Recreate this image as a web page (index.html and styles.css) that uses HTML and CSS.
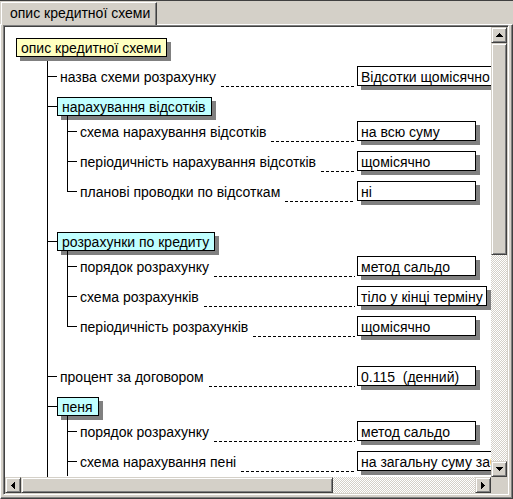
FILE: index.html
```html
<!DOCTYPE html>
<html lang="uk">
<head>
<meta charset="utf-8">
<title>опис кредитної схеми</title>
<link rel="stylesheet" href="styles.css">
</head>
<body>
<div class="tabstrip">
  <div class="tab">опис кредитної схеми</div>
</div>
<div class="panel">
  <div class="control">
    <div class="viewport">
      <div class="tree">
        <div class="rhead"><span class="box root">опис кредитної схеми</span></div>
        <div class="kids1">
          <div class="leaf l1">
            <div class="lead"><span class="tick"></span><span class="label">назва схеми розрахунку</span><span class="dash"></span></div>
            <span class="val">Відсотки щомісячно - тіло у кінці терміну</span>
          </div>
          <div class="group">
            <div class="ghead"><span class="tick"></span><span class="box grp">нарахування відсотків</span></div>
            <div class="kids2">
              <div class="leaf l2">
                <div class="lead"><span class="tick"></span><span class="label">схема нарахування відсотків</span><span class="dash"></span></div>
                <span class="val">на всю суму</span>
              </div>
              <div class="leaf l2">
                <div class="lead"><span class="tick"></span><span class="label">періодичність нарахування відсотків</span><span class="dash"></span></div>
                <span class="val">щомісячно</span>
              </div>
              <div class="leaf l2">
                <div class="lead"><span class="tick"></span><span class="label">планові проводки по відсоткам</span><span class="dash"></span></div>
                <span class="val">ні</span>
              </div>
            </div>
          </div>
          <div class="group">
            <div class="ghead"><span class="tick"></span><span class="box grp">розрахунки по кредиту</span></div>
            <div class="kids2">
              <div class="leaf l2">
                <div class="lead"><span class="tick"></span><span class="label">порядок розрахунку</span><span class="dash"></span></div>
                <span class="val">метод сальдо</span>
              </div>
              <div class="leaf l2">
                <div class="lead"><span class="tick"></span><span class="label">схема розрахунків</span><span class="dash"></span></div>
                <span class="val">тіло у кінці терміну</span>
              </div>
              <div class="leaf l2">
                <div class="lead"><span class="tick"></span><span class="label">періодичність розрахунків</span><span class="dash"></span></div>
                <span class="val">щомісячно</span>
              </div>
            </div>
          </div>
          <div class="leaf l1">
            <div class="lead"><span class="tick"></span><span class="label">процент за договором</span><span class="dash"></span></div>
            <span class="val">0.115  (денний)</span>
          </div>
          <div class="group">
            <div class="ghead"><span class="tick"></span><span class="box grp">пеня</span></div>
            <div class="kids2 cont">
              <div class="leaf l2">
                <div class="lead"><span class="tick"></span><span class="label">порядок розрахунку</span><span class="dash"></span></div>
                <span class="val">метод сальдо</span>
              </div>
              <div class="leaf l2">
                <div class="lead"><span class="tick"></span><span class="label">схема нарахування пені</span><span class="dash"></span></div>
                <span class="val">на загальну суму заборгованості</span>
              </div>
            </div>
          </div>
        </div>
      </div>
    </div>
    <div class="vscroll">
      <div class="btn"><svg width="7" height="4" viewBox="0 0 7 4"><path d="M3 0h1v1h-1zM2 1h3v1h-3zM1 2h5v1h-5zM0 3h7v1h-7z" fill="#000"/></svg></div>
      <div class="thumb vthumb"></div>
      <div class="track"></div>
      <div class="btn"><svg width="7" height="4" viewBox="0 0 7 4"><path d="M0 0h7v1h-7zM1 1h5v1h-5zM2 2h3v1h-3zM3 3h1v1h-1z" fill="#000"/></svg></div>
    </div>
    <div class="hscroll">
      <div class="btn"><svg width="4" height="7" viewBox="0 0 4 7"><path d="M0 3h1v1h-1zM1 2h1v3h-1zM2 1h1v5h-1zM3 0h1v7h-1z" fill="#000"/></svg></div>
      <div class="thumb hthumb"></div>
      <div class="track"></div>
      <div class="btn"><svg width="4" height="7" viewBox="0 0 4 7"><path d="M0 0h1v7h-1zM1 1h1v5h-1zM2 2h1v3h-1zM3 3h1v1h-1z" fill="#000"/></svg></div>
    </div>
    <div class="corner"></div>
  </div>
</div>
</body>
</html>
```
FILE: styles.css
```css
* { box-sizing: border-box; }
html, body { margin: 0; padding: 0; }
body {
  width: 513px;
  height: 499px;
  overflow: hidden;
  background: #d4d0c8;
  font-family: "Liberation Sans", Arial, sans-serif;
  font-size: 14px;
  color: #000;
}

/* tab strip */
.tabstrip {
  height: 24px;
  border-top: 1px solid #404040;
  display: flex;
  align-items: flex-end;
}
.tab {
  position: relative;
  z-index: 1;
  margin-left: 1px;
  margin-bottom: -1px;
  width: 156px;
  height: 23px;
  background: #d4d0c8;
  border-left: 1px solid #fff;
  border-top: 1px solid #fff;
  border-right: 1px solid #404040;
  box-shadow: inset -1px 0 #808080;
  padding: 2px 0 0 8px;
  line-height: 16px;
  white-space: nowrap;
}

/* panel */
.panel {
  height: 475px;
  border: 1px solid;
  border-color: #fff #404040 #404040 #fff;
  box-shadow: inset -1px -1px #808080;
  padding: 0 3px 3px 2px;
}
.control {
  width: 506px;
  height: 470px;
  border: 1px solid;
  border-color: #808080 #fff #fff #808080;
  padding: 1px;
  box-shadow: inset 1px 1px #404040, inset -1px -1px #d4d0c8;
  display: grid;
  grid-template-columns: 486px 16px;
  grid-template-rows: 450px 16px;
}
.viewport {
  overflow: hidden;
  background: #fff;
}

/* tree */
.tree {
  padding: 11px 0 0 11px;
}
.rhead {
  display: flex;
}
.box {
  flex: none;
  height: 19px;
  border: 1px solid #000;
  line-height: 19px;
  padding: 0 5px 0 4px;
  white-space: nowrap;
  box-shadow: 4px 4px 0 #808080;
}
.root { background: #ffffc0; }
.grp { background: #c0ffff; }

.kids1 {
  margin-left: 31px;
  border-left: 1px solid #000;
  padding-top: 4px;
  padding-bottom: 20px;
}
.kids2 {
  margin-left: 19px;
}
.group {
  margin-bottom: 20px;
}
.ghead {
  display: flex;
  align-items: flex-start;
  height: 25px;
  padding-top: 6px;
}
.ghead .tick { margin-top: 9px; }

.leaf {
  display: flex;
  align-items: flex-start;
  height: 30px;
  padding-top: 5px;
}
.l2 {
  position: relative;
  padding-left: 1px;
}
.l2::before {
  content: "";
  position: absolute;
  left: 0;
  top: 0;
  bottom: 0;
  width: 1px;
  background: #000;
}
.l2:last-child::before {
  bottom: auto;
  height: 16px;
}
.cont .l2:last-child::before {
  bottom: 0;
  height: auto;
}
.lead {
  flex: none;
  display: flex;
  align-items: flex-start;
}
.l1 .lead { width: 309px; }
.l2 .lead { width: 289px; }
.tick {
  flex: none;
  width: 9px;
  height: 1px;
  background: #000;
}
.leaf .tick { margin-top: 10px; }
.label {
  margin: 1px 0 0 3px;
  line-height: 20px;
  white-space: nowrap;
}
.dash {
  flex: 1;
  height: 21px;
  margin: 0 2px 0 5px;
  background: repeating-linear-gradient(to right, #000 0 3px, transparent 3px 5px) left bottom / 100% 1px no-repeat;
}
.val {
  flex: none;
  height: 20px;
  min-width: 119px;
  border: 1px solid #000;
  background: #fff;
  line-height: 20px;
  padding: 0 3px;
  white-space: pre;
  box-shadow: 4px 4px 0 #808080;
}

/* scrollbars */
.vscroll {
  display: flex;
  flex-direction: column;
}
.hscroll {
  display: flex;
}
.btn, .thumb {
  flex: none;
  background: #d4d0c8;
  border: 1px solid;
  border-color: #d4d0c8 #404040 #404040 #d4d0c8;
  box-shadow: inset 1px 1px #fff, inset -1px -1px #808080;
}
.btn {
  width: 16px;
  height: 16px;
  display: flex;
  align-items: center;
  justify-content: center;
}
.btn svg { display: block; shape-rendering: crispEdges; }
.vthumb { width: 16px; height: 212px; }
.hthumb { width: 312px; height: 16px; }
.track {
  flex: 1;
  background: repeating-conic-gradient(#d4d0c8 0 25%, #fff 0 50%) 0 0 / 2px 2px;
}
.corner {
  background: #d4d0c8;
}
```
